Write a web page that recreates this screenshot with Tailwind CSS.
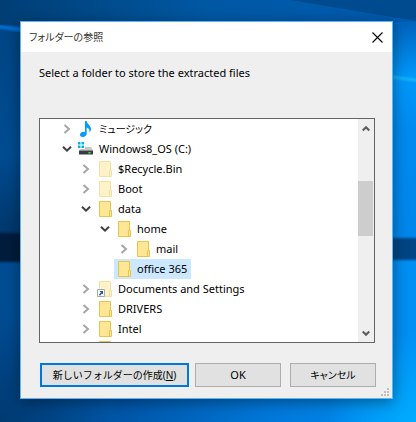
<!DOCTYPE html>
<html lang="ja">
<head>
  <meta charset="UTF-8" />
  <meta name="viewport" content="width=device-width, initial-scale=1.0"/>
  <title>フォルダーの参照</title>
  <script src="https://cdn.jsdelivr.net/npm/@tailwindcss/browser@4"></script>
</head>
<body class="relative min-h-screen overflow-hidden bg-[#004a90] pt-[21px] pr-[23px] pl-5 text-black text-[11px] font-['Noto_Sans','Noto_Sans_CJK_JP',sans-serif]">

  <!-- desktop wallpaper -->
  <svg class="absolute inset-0 h-full w-full" viewBox="0 0 416 422" preserveAspectRatio="none" aria-hidden="true">
    <defs>
      <linearGradient id="top" x1="0" x2="1"><stop offset="0" stop-color="#003e74"/><stop offset=".5" stop-color="#0058a4"/><stop offset="1" stop-color="#005cb0"/></linearGradient>
      <linearGradient id="left" x1="0" x2="0" y1="0" y2="1"><stop offset="0" stop-color="#004584"/><stop offset=".6" stop-color="#004c92"/><stop offset="1" stop-color="#00366a"/></linearGradient>
      <linearGradient id="right" x1="0" x2="0" y1="0" y2="1"><stop offset="0" stop-color="#0062bc"/><stop offset=".25" stop-color="#0098fa"/><stop offset=".5" stop-color="#008af0"/><stop offset="1" stop-color="#0086ea"/></linearGradient>
      <linearGradient id="low" x1="0" x2="1"><stop offset="0" stop-color="#004c92"/><stop offset=".3" stop-color="#0056a8"/><stop offset=".65" stop-color="#0078da"/><stop offset="1" stop-color="#0090f4"/></linearGradient>
      <radialGradient id="glow" cx="416" cy="422" r="90" gradientUnits="userSpaceOnUse"><stop offset="0" stop-color="#00acff"/><stop offset="1" stop-color="#00acff" stop-opacity="0"/></radialGradient>
      <radialGradient id="shade" cx="0" cy="422" r="110" gradientUnits="userSpaceOnUse"><stop offset="0" stop-color="#003a72"/><stop offset="1" stop-color="#003a72" stop-opacity="0"/></radialGradient>
      <filter id="soft"><feGaussianBlur stdDeviation="1"/></filter>
    </defs>
    <rect width="416" height="30" fill="url(#top)"/>
    <rect y="26" width="208" height="212" fill="url(#left)"/>
    <path d="M208 22H416V240H208Z" fill="url(#right)"/>
    <path d="M290 0L416 21V0Z" fill="#004b90"/>
    <path d="M-4 26L30 31" stroke="#0070d4" stroke-width="4" filter="url(#soft)"/>
    <path d="M385 76L420 81" stroke="#18b4fa" stroke-width="3" filter="url(#soft)"/>
    <rect y="258" width="416" height="164" fill="url(#low)"/>
    <rect y="258" width="416" height="164" fill="url(#glow)"/>
    <rect y="258" width="416" height="164" fill="url(#shade)"/>
    <rect x="-4" y="233" width="212" height="29" fill="#001c3e" filter="url(#soft)"/>
    <rect x="208" y="238" width="212" height="22" fill="#004484" filter="url(#soft)"/>
  </svg>

  <!-- shared icons -->
  <svg class="hidden">
    <symbol id="closed" viewBox="0 0 8 10"><path d="M1.5 1L6 5L1.5 9" fill="none" stroke="#a6a6a6" stroke-width="2"/></symbol>
    <symbol id="open" viewBox="0 0 10 8"><path d="M1 1.7L5 5.7L9 1.7" fill="none" stroke="#404040" stroke-width="2"/></symbol>
    <symbol id="folder" viewBox="0 0 18 16">
      <path d="M2.5 .5H13.5V15.5H2.5Z" fill="#ffe694" stroke="#e8c44c"/>
      <path d="M12.5 9.5H14.5V15.5H12.5Z" fill="#ffe694" stroke="#e8c44c"/>
    </symbol>
    <symbol id="music" viewBox="0 0 18 16">
      <path d="M7 0H8.600C9 3 13 4.500 13 8C13 9.500 12.500 10.500 11.500 11.500C12 9 11 7.500 8.700 6.500V12.500C8.700 14.800 6.800 16 4.800 16C3 16 2 15 2 13.700C2 11.800 4.500 10.300 7 10.900Z" fill="#0a9bf5"/>
    </symbol>
    <symbol id="drive" viewBox="0 0 18 16">
      <path d="M0 1H2.500V3.500H0ZM3.500 1H6V3.500H3.500ZM0 4.500H2.500V7H0ZM3.500 4.500H6V7H3.500Z" fill="#00b4f0"/>
      <path d="M7 6H13L15 9.500H1L2.500 8H7Z" fill="#c4c8ca"/>
      <path d="M1 9.500H15V13.500H1Z" fill="#393d40"/>
      <path d="M10.500 11H12.500V12.500H10.500Z" fill="#4ee05a"/>
    </symbol>
    <symbol id="shortcut" viewBox="0 0 8 8">
      <path d="M.5 .5H7.500V7.500H.5Z" fill="#fff" stroke="#a8a8a8"/>
      <path d="M2.500 2H6V5.500L4.900 4.500L3 6.700L1.900 5.700L3.900 3.500Z" fill="#225a9c"/>
    </symbol>
  </svg>

  <main role="dialog" aria-labelledby="title" class="relative border border-[#62b4ee] bg-[#efefef] pb-[11px] shadow-[0_3px_14px_rgba(0,0,0,0.4)]">
    <header class="flex h-[30px] items-center justify-between bg-white pr-2 pl-2">
      <h1 id="title" class="text-[10px] text-[#333] [font-feature-settings:'palt']">フォルダーの参照</h1>
      <button aria-label="閉じる" class="p-px">
        <svg class="h-[11px] w-[11px]" viewBox="0 0 11 11"><path d="M.5 .5L10.500 10.500M10.500 .5L.5 10.500" stroke="#000" stroke-width="1.1"/></svg>
      </button>
    </header>

    <p class="mt-3 pl-[18px] leading-[18px]">Select a folder to store the extracted files</p>

    <div class="mt-9 mr-[17px] ml-[18px] flex h-[225px] border border-[#646464] bg-white">
      <ul role="tree" class="min-w-0 flex-1 overflow-hidden">
        <li role="treeitem" class="flex h-5 items-center pl-[17px]">
          <button aria-label="展開" class="flex w-[19px] justify-center"><svg class="h-[10px] w-2"><use href="#closed"/></svg></button>
          <span class="flex h-5 items-center gap-[3px] pr-1 pl-0.5 text-[10px] [font-feature-settings:'palt']"><svg class="h-4 w-[18px]"><use href="#music"/></svg>ミュージック</span>
        </li>
        <li role="treeitem" class="flex h-5 items-center pl-[17px]">
          <button aria-label="折りたたむ" class="flex w-[19px] justify-center"><svg class="h-2 w-[10px]"><use href="#open"/></svg></button>
          <span class="flex h-5 items-center gap-[3px] pr-1 pl-0.5"><svg class="h-4 w-[18px]"><use href="#drive"/></svg>Windows8_OS (C:)</span>
        </li>
        <li role="treeitem" class="flex h-5 items-center pl-9">
          <button aria-label="展開" class="flex w-[19px] justify-center"><svg class="h-[10px] w-2"><use href="#closed"/></svg></button>
          <span class="flex h-5 items-center gap-[3px] pr-1 pl-0.5"><svg class="h-4 w-[18px] opacity-50"><use href="#folder"/></svg>$Recycle.Bin</span>
        </li>
        <li role="treeitem" class="flex h-5 items-center pl-9">
          <button aria-label="展開" class="flex w-[19px] justify-center"><svg class="h-[10px] w-2"><use href="#closed"/></svg></button>
          <span class="flex h-5 items-center gap-[3px] pr-1 pl-0.5"><svg class="h-4 w-[18px] opacity-50"><use href="#folder"/></svg>Boot</span>
        </li>
        <li role="treeitem" class="flex h-5 items-center pl-9">
          <button aria-label="折りたたむ" class="flex w-[19px] justify-center"><svg class="h-2 w-[10px]"><use href="#open"/></svg></button>
          <span class="flex h-5 items-center gap-[3px] pr-1 pl-0.5"><svg class="h-4 w-[18px]"><use href="#folder"/></svg>data</span>
        </li>
        <li role="treeitem" class="flex h-5 items-center pl-[55px]">
          <button aria-label="折りたたむ" class="flex w-[19px] justify-center"><svg class="h-2 w-[10px]"><use href="#open"/></svg></button>
          <span class="flex h-5 items-center gap-[3px] pr-1 pl-0.5"><svg class="h-4 w-[18px]"><use href="#folder"/></svg>home</span>
        </li>
        <li role="treeitem" class="flex h-5 items-center pl-[74px]">
          <button aria-label="展開" class="flex w-[19px] justify-center"><svg class="h-[10px] w-2"><use href="#closed"/></svg></button>
          <span class="flex h-5 items-center gap-[3px] pr-1 pl-0.5"><svg class="h-4 w-[18px]"><use href="#folder"/></svg>mail</span>
        </li>
        <li role="treeitem" aria-selected="true" class="flex h-5 items-center pl-[74px]">
          <span class="flex h-5 items-center gap-[3px] bg-[#cce8ff] pr-1 pl-0.5"><svg class="h-4 w-[18px]"><use href="#folder"/></svg>office 365</span>
        </li>
        <li role="treeitem" class="flex h-5 items-center pl-9">
          <button aria-label="展開" class="flex w-[19px] justify-center"><svg class="h-[10px] w-2"><use href="#closed"/></svg></button>
          <span class="relative flex h-5 items-center gap-[3px] pr-1 pl-0.5"><svg class="h-4 w-[18px] opacity-50"><use href="#folder"/></svg><svg class="absolute bottom-0.5 left-0.5 h-2 w-2"><use href="#shortcut"/></svg>Documents and Settings</span>
        </li>
        <li role="treeitem" class="flex h-5 items-center pl-9">
          <button aria-label="展開" class="flex w-[19px] justify-center"><svg class="h-[10px] w-2"><use href="#closed"/></svg></button>
          <span class="flex h-5 items-center gap-[3px] pr-1 pl-0.5"><svg class="h-4 w-[18px]"><use href="#folder"/></svg>DRIVERS</span>
        </li>
        <li role="treeitem" class="flex h-5 items-center pl-9">
          <button aria-label="展開" class="flex w-[19px] justify-center"><svg class="h-[10px] w-2"><use href="#closed"/></svg></button>
          <span class="flex h-5 items-center gap-[3px] pr-1 pl-0.5"><svg class="h-4 w-[18px]"><use href="#folder"/></svg>Intel</span>
        </li>
        <li role="treeitem" class="flex h-5 items-center pl-[57px]"><svg class="h-4 w-[18px]"><use href="#folder"/></svg></li>
      </ul>

      <!-- scroll bar -->
      <div class="flex w-4 flex-col bg-[#efefef]">
        <button aria-label="上へ" class="flex h-[18px] w-[15px] items-center justify-center"><svg class="h-[7px] w-2" viewBox="0 0 8 7"><path d="M.7 5.500L4 2.200L7.300 5.500" fill="none" stroke="#5c5c5c" stroke-width="2.200"/></svg></button>
        <div class="flex-1">
          <div class="mt-11 h-[55px] w-[15px] bg-[#cdcdcd]"></div>
        </div>
        <button aria-label="下へ" class="flex h-[18px] w-[15px] items-center justify-center"><svg class="h-[7px] w-2" viewBox="0 0 8 7"><path d="M.7 1.500L4 4.800L7.300 1.500" fill="none" stroke="#5c5c5c" stroke-width="2.200"/></svg></button>
      </div>
    </div>

    <footer class="mt-5 flex pr-4 pl-[19px]">
      <button class="mr-1.5 h-6 flex-1 border-2 border-[#0078d7] bg-[#e1e1e1] text-[10px] whitespace-nowrap">新しいフォルダーの作成(<u>N</u>)</button>
      <button class="mr-[9px] h-6 w-[86px] border border-[#adadad] bg-[#e1e1e1]">OK</button>
      <button class="h-6 w-[86px] border border-[#adadad] bg-[#e1e1e1] text-[10px] [font-feature-settings:'palt']">キャンセル</button>
    </footer>

    <!-- resize grip -->
    <svg class="absolute right-[3px] bottom-0.5 h-2 w-2" viewBox="0 0 8 8" aria-hidden="true"><path d="M6 0H8V2H6ZM3 3H5V5H3ZM6 3H8V5H6ZM0 6H2V8H0ZM3 6H5V8H3ZM6 6H8V8H6Z" fill="#bfbfbf"/></svg>
  </main>
</body>
</html>
